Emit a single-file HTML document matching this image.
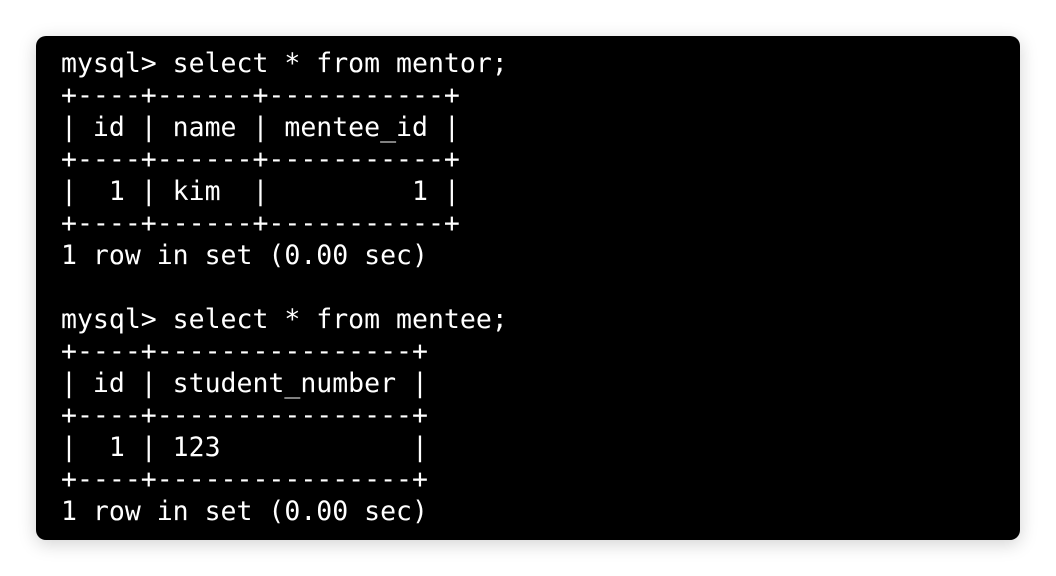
<!DOCTYPE html>
<html><head><style>
html,body{margin:0;padding:0;background:#fff;width:1056px;height:576px;overflow:hidden}
.box{position:absolute;left:36px;top:36px;width:984px;height:504px;background:#000;border-radius:10px;box-shadow:0 4px 18px rgba(0,0,0,0.18)}
pre{position:absolute;left:61px;top:48px;margin:0;color:#fff;font-family:"DejaVu Sans Mono","Liberation Mono",monospace;font-size:26.5px;line-height:32px;letter-spacing:0}
</style></head><body>
<div class="box"></div>
<pre>mysql&gt; select * from mentor;
+----+------+-----------+
| id | name | mentee_id |
+----+------+-----------+
|  1 | kim  |         1 |
+----+------+-----------+
1 row in set (0.00 sec)

mysql&gt; select * from mentee;
+----+----------------+
| id | student_number |
+----+----------------+
|  1 | 123            |
+----+----------------+
1 row in set (0.00 sec)</pre>
</body></html>
